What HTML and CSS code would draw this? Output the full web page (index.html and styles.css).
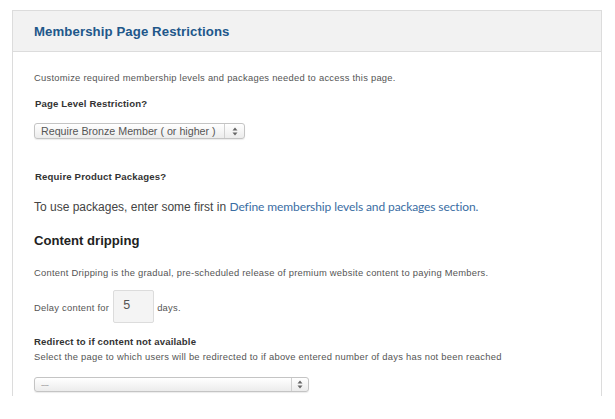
FILE: index.html
```html
<!DOCTYPE html>
<html>
<head>
<meta charset="utf-8">
<link rel="stylesheet" href="styles.css">
</head>
<body>
<div class="panel">
  <div class="panel-head"><h2 class="title">Membership Page Restrictions</h2></div>
  <div class="panel-body">
    <p class="small intro">Customize required membership levels and packages needed to access this page.</p>
    <p class="label lbl1">Page Level Restriction?</p>
    <div class="select sel1">
      <span class="sel-text">Require Bronze Member ( or higher )</span>
      <span class="sel-arrow"><svg width="6" height="9" viewBox="0 0 6 9"><path d="M3 0.5 L5.5 3.5 H0.5 Z M3 8.5 L5.5 5.5 H0.5 Z" fill="#666"/></svg></span>
    </div>
    <p class="label lbl2">Require Product Packages?</p>
    <p class="packages">To use packages, enter some first in <a class="link" href="#">Define membership levels and packages section.</a></p>
    <h3 class="sub">Content dripping</h3>
    <p class="small drip">Content Dripping is the gradual, pre-scheduled release of premium website content to paying Members.</p>
    <div class="delay">
      <span class="small">Delay content for</span>
      <span class="num">5</span>
      <span class="small">days.</span>
    </div>
    <p class="label lbl3">Redirect to if content not available</p>
    <p class="small help">Select the page to which users will be redirected to if above entered number of days has not been reached</p>
    <div class="select sel2">
      <span class="sel-text dash">----</span>
      <span class="sel-arrow"><svg width="6" height="9" viewBox="0 0 6 9"><path d="M3 0.5 L5.5 3.5 H0.5 Z M3 8.5 L5.5 5.5 H0.5 Z" fill="#666"/></svg></span>
    </div>
  </div>
</div>
</body>
</html>
```

FILE: styles.css
```css
html, body {
  margin: 0;
  padding: 0;
  background: #ffffff;
}
body {
  font-family: "Liberation Sans", Arial, sans-serif;
  color: #444;
  padding: 10px 0 0 12px;
}
.panel {
  width: 590px;
  border: 1px solid #dcdcdc;
  border-bottom: none;
  height: 386px;
  box-sizing: border-box;
}
.panel-head {
  height: 40px;
  background: #f2f2f2;
  border-bottom: 1px solid #dcdcdc;
  display: flex;
  align-items: center;
  padding-left: 21px;
}
.title {
  margin: 0;
  font-size: 13.2px;
  font-weight: bold;
  color: #21578a;
  letter-spacing: 0.1px;
}
.panel-body {
  padding-left: 21px;
}
p { margin: 0; }
.small {
  font-size: 9.4px;
  line-height: 12px;
  letter-spacing: 0.25px;
  color: #555;
}
.intro { margin-top: 20px; }
.label {
  font-size: 9.6px;
  line-height: 12px;
  letter-spacing: 0.15px;
  font-weight: bold;
  color: #333;
  padding-left: 1px;
}
.lbl1 { margin-top: 14px; }
.select {
  display: flex;
  align-items: stretch;
  box-sizing: border-box;
  border: 1px solid #c4c4c4;
  border-radius: 3px;
  background: linear-gradient(#ffffff, #ececec);
  box-shadow: 0 1px 1px rgba(0,0,0,0.08);
}
.sel1 {
  margin-top: 13px;
  width: 211px;
  height: 16px;
}
.sel2 {
  margin-top: 14px;
  width: 275px;
  height: 15px;
}
.sel-text {
  flex: 1;
  font-size: 10.7px;
  line-height: 14px;
  color: #555;
  padding-left: 6px;
  white-space: nowrap;
}
.dash {
  font-size: 7px;
  color: #888;
  letter-spacing: -0.5px;
}
.sel-arrow {
  width: 19px;
  border-left: 1px solid #d0d0d0;
  display: flex;
  align-items: center;
  justify-content: center;
}
.sel2 .sel-arrow { width: 16px; }
.lbl2 { margin-top: 32px; }
.packages {
  margin-top: 16px;
  font-size: 12px;
  line-height: 16px;
  color: #444;
}
.link {
  font-family: Lato, "Liberation Sans", sans-serif;
  color: #3a6da3;
  text-decoration: none;
  font-size: 12px;
  letter-spacing: -0.1px;
}
.sub {
  margin: 17px 0 0 0;
  font-size: 13.1px;
  line-height: 18px;
  font-weight: bold;
  color: #222;
}
.drip { margin-top: 17px; }
.delay {
  margin-top: 11px;
  display: flex;
  align-items: center;
  height: 33px;
}
.num {
  box-sizing: border-box;
  width: 41px;
  height: 33px;
  margin: 0 3px 0 4px;
  background: #f4f4f4;
  border: 1px solid #dcdcdc;
  border-radius: 2px;
  font-size: 12.5px;
  color: #555;
  padding: 7px 0 0 9px;
}
.delay .small { margin-top: 3px; }
.lbl3 {
  margin-top: 13px;
  padding-left: 0;
}
.help { margin-top: 3px; }
```
